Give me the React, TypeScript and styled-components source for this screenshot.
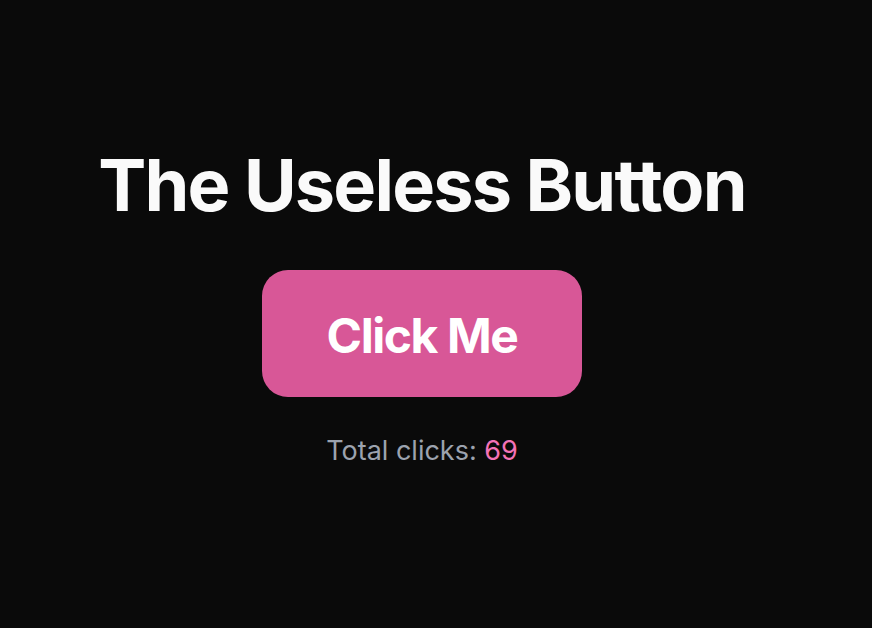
import styled, { createGlobalStyle } from "styled-components";
import { useState } from "react";

const GlobalStyle = createGlobalStyle`
    html, body {
        margin: 0;
        padding: 0;
        background-color: #0a0a0a;
    }
    body {
        font-family: Inter, "Noto Sans", sans-serif;
    }
`;

const Spage = styled.main`
    min-height: 628px;
    padding: 140px 28px 0 0;
    box-sizing: border-box;
    display: flex;
    flex-direction: column;
    align-items: center;
`;
const Stitle = styled.h1`
    margin: 0;
    font-size: 72px;
    font-weight: 700;
    line-height: 90px;
    letter-spacing: -0.025em;
    color: #fafafa;
`;
const Sbutton = styled.button`
    margin-top: 40px;
    width: 320px;
    height: 127px;
    border: none;
    border-radius: 26px;
    background-color: #d85797;
    color: #ffffff;
    font-family: inherit;
    font-size: 48px;
    font-weight: 700;
    letter-spacing: -0.03em;
    padding-top: 4px;
    cursor: pointer;
`;
const Scount = styled.p`
    margin: 36px 0 0;
    font-size: 27px;
    line-height: 36px;
    color: #9ca3af;
`;
const Snumber = styled.span`
    color: #f472b6;
`;

const App = () => {
    const [clicks, setClicks] = useState(69);

    return (
        <>
            <GlobalStyle />
            <Spage>
                <Stitle>The Useless Button</Stitle>
                <Sbutton onClick={() => setClicks(clicks + 1)}>Click Me</Sbutton>
                <Scount>Total clicks: <Snumber>{clicks}</Snumber></Scount>
            </Spage>
        </>
    );
};

export default App;
